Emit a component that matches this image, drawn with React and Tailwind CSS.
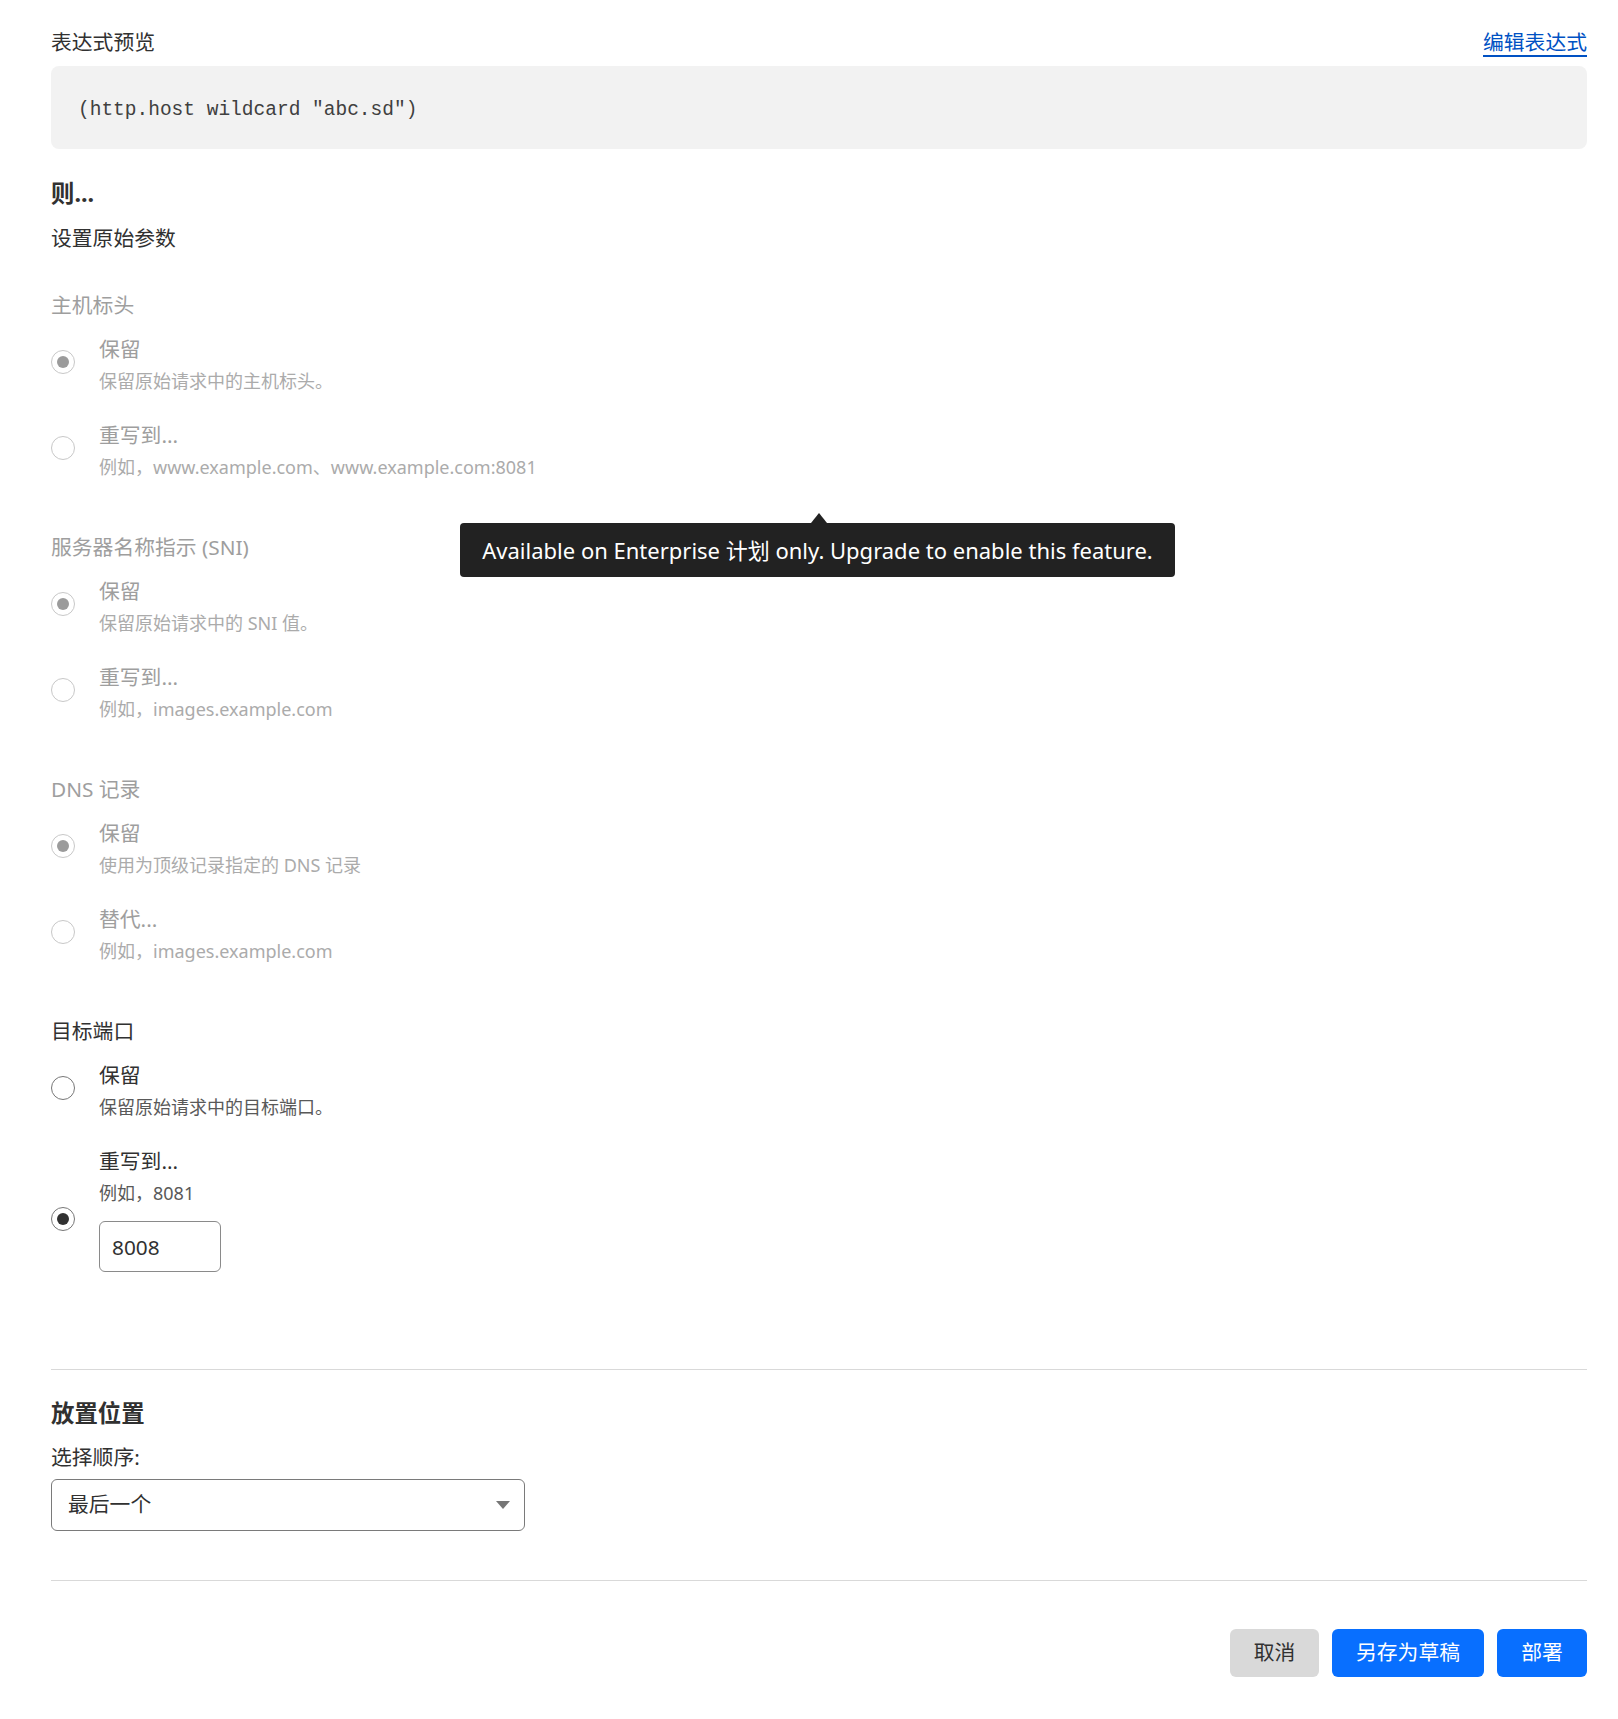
import React from "react";

const FONT = "font-['Noto_Sans','Noto_Sans_CJK_SC',sans-serif]";

function Radio({ checked, disabled }) {
  return (
    <span
      className={`flex h-6 w-6 shrink-0 items-center justify-center rounded-full border bg-white ${
        disabled ? "border-[#c8c8c8]" : "border-[#777777]"
      }`}
    >
      {checked && (
        <span className={`h-3 w-3 rounded-full ${disabled ? "bg-[#9b9b9b]" : "bg-[#313131]"}`} />
      )}
    </span>
  );
}

function Option({ title, desc, checked, disabled, radioTop = "mt-[15px]", children }) {
  return (
    <div className="flex items-start gap-6">
      <div className={radioTop}>
        <Radio checked={checked} disabled={disabled} />
      </div>
      <div className="flex flex-col">
        <div className={`text-[20.8px] leading-[28px] ${disabled ? "text-[#9e9e9e]" : "text-[#313131]"}`}>
          {title}
        </div>
        <div className={`mt-1 text-[18px] leading-[28px] ${disabled ? "text-[#ababab]" : "text-[#595959]"}`}>
          {desc}
        </div>
        {children}
      </div>
    </div>
  );
}

function Group({ label, disabled, className = "", children }) {
  return (
    <div className={className}>
      <div className={`text-[20.8px] leading-[28px] ${disabled ? "text-[#9e9e9e]" : "text-[#313131]"}`}>
        {label}
      </div>
      <div className="mt-4 flex flex-col gap-[26px]">{children}</div>
    </div>
  );
}

export default function App() {
  return (
    <div className={`relative min-h-screen bg-white pl-[51px] pr-[31px] pt-[28px] pb-[43px] text-[#313131] ${FONT}`}>
      {/* Expression preview */}
      <div className="flex items-center justify-between">
        <span className="text-[20.8px] leading-[28px]">表达式预览</span>
        <a
          href="#"
          className="text-[20.8px] leading-[28px] text-[#0051c3] underline decoration-2 underline-offset-[5px]"
        >
          编辑表达式
        </a>
      </div>
      <div className="mt-[10px] flex h-[83px] items-center rounded-lg bg-[#f2f2f2] px-[27px] pt-[6px]">
        <code className="font-['Liberation_Mono',monospace] text-[19.5px] text-[#404040]">
          (http.host wildcard "abc.sd")
        </code>
      </div>

      {/* Then */}
      <h2 className="mt-[28px] text-[23.4px] font-bold leading-[32px]">则...</h2>
      <div className="mt-[15px] text-[20.8px] leading-[28px]">设置原始参数</div>

      <Group label="主机标头" disabled className="mt-[39px]">
        <Option checked disabled title="保留" desc="保留原始请求中的主机标头。" />
        <Option disabled title="重写到..." desc="例如，www.example.com、www.example.com:8081" />
      </Group>

      <Group label="服务器名称指示 (SNI)" disabled className="mt-[52px]">
        <Option checked disabled title="保留" desc="保留原始请求中的 SNI 值。" />
        <Option disabled title="重写到..." desc="例如，images.example.com" />
      </Group>

      <Group label="DNS 记录" disabled className="mt-[52px]">
        <Option checked disabled title="保留" desc="使用为顶级记录指定的 DNS 记录" />
        <Option disabled title="替代..." desc="例如，images.example.com" />
      </Group>

      <Group label="目标端口" className="mt-[52px]">
        <Option title="保留" desc="保留原始请求中的目标端口。" />
        <Option checked title="重写到..." desc="例如，8081" radioTop="mt-[60px]">
          <input
            defaultValue="8008"
            className="mt-[14px] h-[51px] w-[122px] rounded-md border border-[#8a8a8a] px-3 text-[20.8px] text-[#313131] outline-none"
          />
        </Option>
      </Group>

      <div className="mt-[97px] h-px bg-[#d9d9d9]" />

      {/* Placement */}
      <h2 className="mt-[27px] text-[23.4px] font-bold leading-[32px]">放置位置</h2>
      <div className="mt-[14px] text-[20.8px] leading-[28px]">选择顺序:</div>
      <div className="mt-[8px] flex h-[52px] w-[474px] items-center justify-between rounded-md border border-[#7a7a7a] pl-4 pr-[14px]">
        <span className="text-[20.8px]">最后一个</span>
        <svg width="14" height="8" viewBox="0 0 14 8">
          <path d="M0 0 L14 0 L7 8 Z" fill="#767676" />
        </svg>
      </div>

      <div className="mt-[49px] h-px bg-[#d9d9d9]" />

      <div className="mt-[48px] flex justify-end gap-[13px]">
        <button className="h-12 w-[89px] rounded-md bg-[#d9d9d9] text-[20.8px] text-[#313131]">取消</button>
        <button className="h-12 w-[152px] rounded-md bg-[#086fff] text-[20.8px] text-white">另存为草稿</button>
        <button className="h-12 w-[90px] rounded-md bg-[#086fff] text-[20.8px] text-white">部署</button>
      </div>

      {/* Tooltip */}
      <div className="absolute left-[460px] top-[523px] flex h-[54px] w-[715px] items-center justify-center rounded bg-[#222222] text-[22px] text-white">
        <span className="absolute -top-[10px] left-[351px] h-0 w-0 border-x-[8px] border-b-[10px] border-x-transparent border-b-[#222222]" />
        Available on Enterprise 计划 only. Upgrade to enable this feature.
      </div>
    </div>
  );
}
